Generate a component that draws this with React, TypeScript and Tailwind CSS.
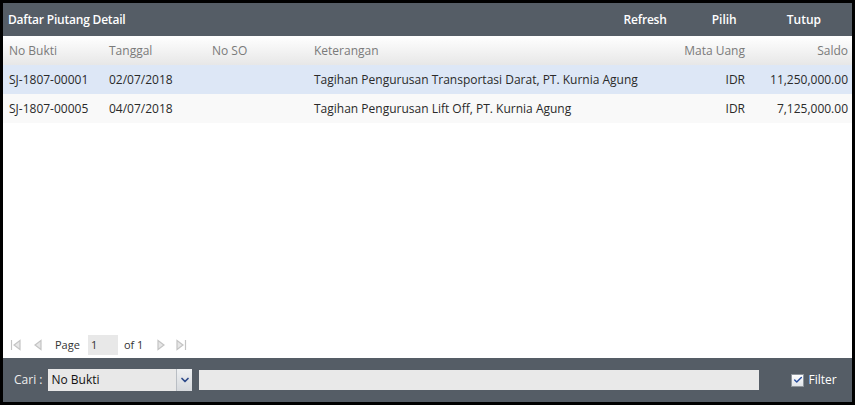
import { Check, ChevronDown } from "lucide-react"

const rows = [
  { bukti: "SJ-1807-00001", tanggal: "02/07/2018", so: "", ket: "Tagihan Pengurusan Transportasi Darat, PT. Kurnia Agung", uang: "IDR", saldo: "11,250,000.00" },
  { bukti: "SJ-1807-00005", tanggal: "04/07/2018", so: "", ket: "Tagihan Pengurusan Lift Off, PT. Kurnia Agung", uang: "IDR", saldo: "7,125,000.00" },
]

const cols = "grid grid-cols-[100px_103px_102px_1fr_100px_98px]"

function PagerIcon({ d }: { d: string }) {
  return (
    <svg width="12" height="14" viewBox="0 0 12 14" className="text-[#c4c4c4]">
      <path d={d} fill="#e6e6e6" stroke="currentColor" strokeWidth="1.2" />
    </svg>
  )
}

export default function App() {
  return (
    <div className="w-[855px] h-[405px] bg-black p-[3px] font-['Open_Sans',sans-serif] text-[12px]">
      <div className="flex h-full flex-col bg-white">
        {/* title bar */}
        <div className="flex h-[33px] items-center bg-[#555d66] pl-[5px] pr-[31px] text-white font-semibold text-[12px]">
          <span className="tracking-[-0.2px]">Daftar Piutang Detail</span>
          <button className="ml-auto tracking-[-0.2px]">Refresh</button>
          <button className="ml-[45px]">Pilih</button>
          <button className="ml-[50px]">Tutup</button>
        </div>

        {/* header */}
        <div className={`${cols} h-[29px] items-center bg-gradient-to-b from-white to-[#e7e7e7] text-[#7a7a7a]`}>
          <div className="pl-[6px]">No Bukti</div>
          <div className="pl-[6px]">Tanggal</div>
          <div className="pl-[6px]">No SO</div>
          <div className="pl-[6px]">Keterangan</div>
          <div className="pr-[9px] text-right">Mata Uang</div>
          <div className="pr-[4px] text-right">Saldo</div>
        </div>

        {rows.map((r, i) => (
          <div
            key={r.bukti}
            className={`${cols} h-[29px] items-center text-[#2a2a2a] ${i === 0 ? "bg-[#dde7f6]" : "bg-[#f9f9f9]"}`}
          >
            <div className="pl-[6px]">{r.bukti}</div>
            <div className="pl-[6px]">{r.tanggal}</div>
            <div className="pl-[6px]">{r.so}</div>
            <div className="pl-[6px]">{r.ket}</div>
            <div className="pr-[9px] text-right">{r.uang}</div>
            <div className="pr-[4px] text-right">{r.saldo}</div>
          </div>
        ))}

        <div className="flex-1" />

        {/* pager */}
        <div className="flex h-[24px] items-center pl-[7px] text-[11px] text-[#333]">
          <PagerIcon d="M1.5 2v10M10 2.5 4 7l6 4.5z" />
          <span className="w-[10px]" />
          <PagerIcon d="M9 2.5 3 7l6 4.5z" />
          <span className="ml-[11px]">Page</span>
          <div className="ml-[8px] flex h-[20px] w-[30px] items-center bg-[#e8e8e8] pl-[3px]">1</div>
          <span className="ml-[6px]">of 1</span>
          <span className="w-[12px]" />
          <PagerIcon d="M3 2.5 9 7l-6 4.5z" />
          <span className="w-[8px]" />
          <PagerIcon d="M2 2.5 8 7l-6 4.5zM10.5 2v10" />
        </div>

        {/* bottom bar */}
        <div className="mt-[1px] flex h-[44px] items-center bg-[#555d66] pl-[11px] text-white">
          <span className="text-[12px] text-[#eee]">Cari :</span>
          <div className="ml-[6px] flex h-[22px] w-[144px] items-center bg-[#e8e8e8] text-[#111]">
            <span className="flex-1 pl-[3px]">No Bukti</span>
            <div className="flex h-full w-[16px] items-center justify-center border-l border-[#b9bec4] bg-gradient-to-b from-[#eef0f2] to-[#d6d9dd]">
              <ChevronDown size={12} strokeWidth={3.5} className="text-[#2d4a8a]" />
            </div>
          </div>
          <div className="ml-[7px] h-[20px] w-[560px] bg-[#e9e9e9]" />
          <div className="ml-[32px] flex h-[13px] w-[13px] items-center justify-center border border-[#8d949b] bg-gradient-to-b from-white to-[#dfe3e8]">
            <Check size={10} strokeWidth={3.5} className="text-[#2a4f9e]" />
          </div>
          <span className="ml-[4px] text-[12px]">Filter</span>
        </div>
      </div>
    </div>
  )
}
